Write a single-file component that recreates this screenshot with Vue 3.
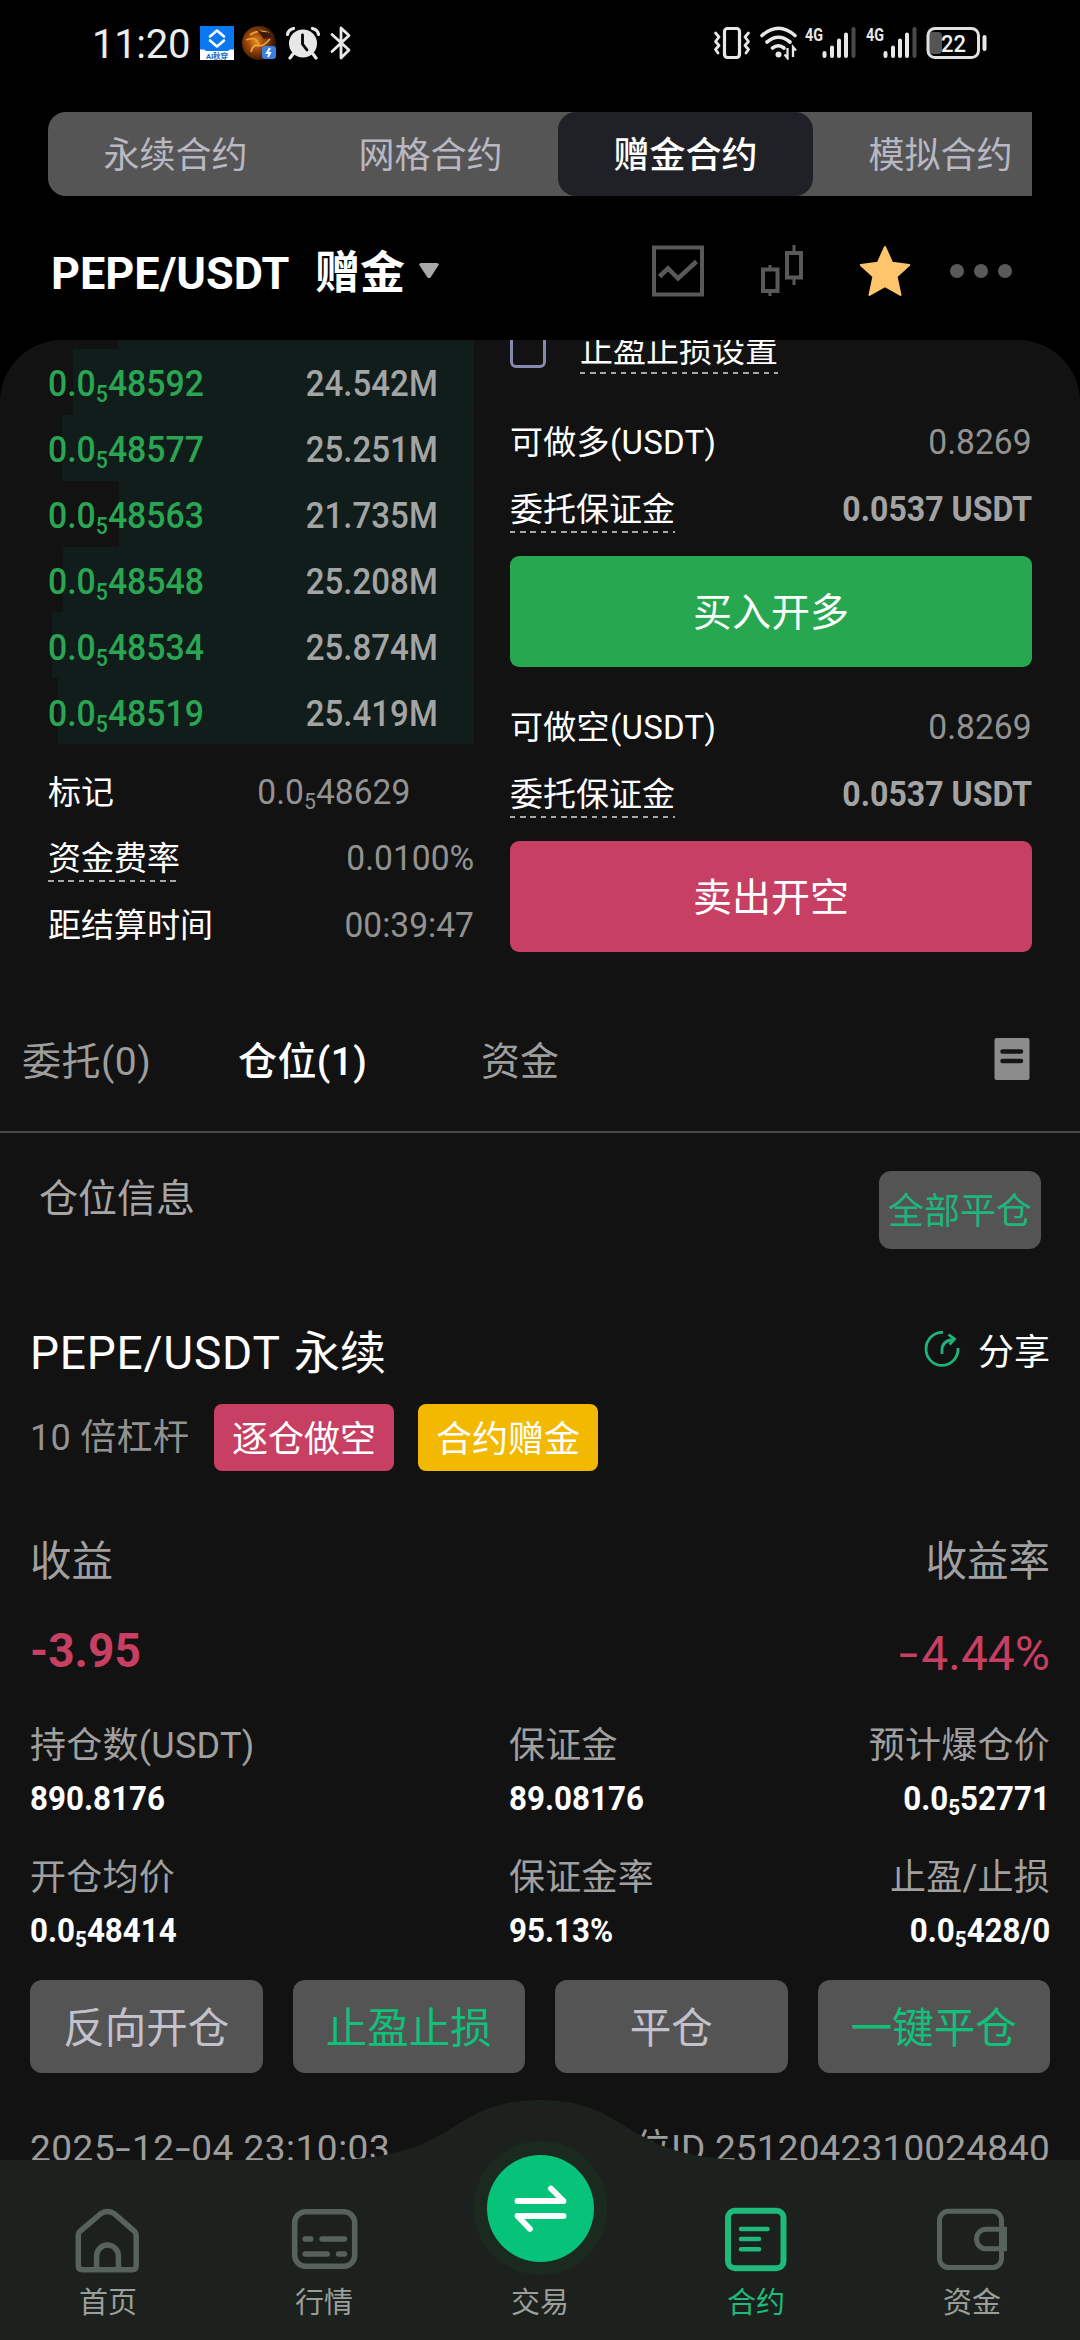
<script setup>
const modes = ['永续合约', '网格合约', '赠金合约', '模拟合约']
const bids = [
  { tail: '48592', qty: '24.542M', depth: 401 },
  { tail: '48577', qty: '25.251M', depth: 412 },
  { tail: '48563', qty: '21.735M', depth: 355 },
  { tail: '48548', qty: '25.208M', depth: 411 },
  { tail: '48534', qty: '25.874M', depth: 422 },
  { tail: '48519', qty: '25.419M', depth: 416 }
]
const orders = [
  { label: '可做多(USDT)', action: '买入开多', side: 'buy' },
  { label: '可做空(USDT)', action: '卖出开空', side: 'sell' }
]
const stats = [
  { label: '持仓数(USDT)', value: '890.8176' },
  { label: '保证金', value: '89.08176' },
  { label: '预计爆仓价', value: '0.0', sub: '5', tail: '52771' },
  { label: '开仓均价', value: '0.0', sub: '5', tail: '48414' },
  { label: '保证金率', value: '95.13%' },
  { label: '止盈/止损', value: '0.0', sub: '5', tail: '428/0' }
]
const actions = [
  { text: '反向开仓' },
  { text: '止盈止损', green: true },
  { text: '平仓' },
  { text: '一键平仓', green: true }
]
</script>

<template>
  <div class="app">
    <header class="status">
      <span class="clock">11:20</span>
      <svg class="st-app" width="34" height="34" viewBox="0 0 34 34">
        <rect width="34" height="34" fill="#0a78f0" />
        <path d="M0 23.5h4l2 1.5h22l2-1.5h4V34H0z" fill="#fff" />
        <path d="M10 10.500l7-6 7 6M10 14.500l7 6 7-6" fill="none" stroke="#fff" stroke-width="2.600" stroke-linejoin="round" stroke-linecap="round" />
        <text x="17" y="32.500" text-anchor="middle" font-size="7.500" font-weight="700" fill="#1a66c8">AI秋穿</text>
      </svg>
      <svg class="st-globe" width="36" height="34" viewBox="0 0 36 34">
        <defs>
          <radialGradient id="ember" cx=".4" cy=".45" r=".6">
            <stop offset="0" stop-color="#e78a1c" />
            <stop offset=".4" stop-color="#a2480c" />
            <stop offset="1" stop-color="#2c1408" />
          </radialGradient>
        </defs>
        <circle cx="17" cy="17" r="17" fill="url(#ember)" />
        <path d="M8 9q8-6 19-2M4 14q10-4 12 3t12-4M9 26q2-9 8-6" fill="none" stroke="#e8a63a" stroke-width="1.800" />
        <path d="M14 3q7 4 12 3l4 5-8 2z" fill="#3a1a0c" />
        <rect x="20" y="20" width="14" height="13" rx="3" fill="#3b7fe0" />
        <path d="M28 22l-3 5h3l-2 4" fill="none" stroke="#fff" stroke-width="2" />
      </svg>
      <svg class="st-alarm" width="34" height="34" viewBox="0 0 34 34">
        <circle cx="17" cy="17.500" r="14" fill="#e8e8e8" />
        <path d="M1.500 8.500Q2 4 7.500 2.500M32.500 8.500Q32 4 26.500 2.500M7 28l-3 4M27 28l3 4" fill="none" stroke="#e8e8e8" stroke-width="3.200" stroke-linecap="round" />
        <path d="M16.500 9v9l4.500 6" fill="none" stroke="#000" stroke-width="2.800" stroke-linecap="round" />
      </svg>
      <svg class="st-bt" width="22" height="36" viewBox="0 0 22 36">
        <path d="M2 9.500L19 25l-8 8V3l8 7.500L2 26.500" fill="none" stroke="#e8e8e8" stroke-width="2.800" stroke-linejoin="round" stroke-linecap="round" />
      </svg>
      <span class="grow"></span>
      <svg width="38" height="34" viewBox="0 0 38 34">
        <rect x="11.500" y="2.500" width="15" height="29" rx="3" fill="none" stroke="#e8e8e8" stroke-width="3.200" />
        <path d="M2.500 7l3.500 4-3.500 4.500 3.500 4-3.500 4 2.500 3.500M35.500 7l-3.500 4 3.500 4.500-3.500 4 3.500 4-2.500 3.500" fill="none" stroke="#e8e8e8" stroke-width="2.800" stroke-linecap="round" stroke-linejoin="round" />
      </svg>
      <svg class="st-wifi" width="38" height="34" viewBox="0 0 38 34">
        <path d="M2 9.500Q18.500-5 35 9.500M7 16q11.500-9.500 23 0M12.500 22q6-4.500 11.500 0" fill="none" stroke="#e8e8e8" stroke-width="3.600" stroke-linecap="round" />
        <circle cx="18.500" cy="28.500" r="3" fill="#e8e8e8" />
        <path d="M27.500 22v10l-3-3.500M33 31V21l3 3.500" fill="none" stroke="#e8e8e8" stroke-width="2.300" />
      </svg>
      <svg v-for="n in 2" :key="n" class="st-sig" width="51" height="34" viewBox="0 0 51 34">
        <text x="0" y="14.500" font-size="18" font-weight="700" textLength="18" lengthAdjust="spacingAndGlyphs" fill="#e8e8e8">4G</text>
        <path d="M19.500 27v3M27 21.500V30M34 14.500V30M41 8.500V30" stroke="#e8e8e8" stroke-width="4" stroke-linecap="round" />
        <path d="M48.500 3v27" stroke="#4a4a4a" stroke-width="4" stroke-linecap="round" />
      </svg>
      <svg class="st-bat" width="62" height="34" viewBox="0 0 62 34">
        <rect x="3" y="6" width="13" height="22" rx="4" fill="#555" />
        <rect x="2" y="2.500" width="50.500" height="29" rx="7" fill="none" stroke="#e0e0e0" stroke-width="3" />
        <path d="M58.500 11v12" stroke="#e8e8e8" stroke-width="4" stroke-linecap="round" />
        <text x="27.500" y="25.500" text-anchor="middle" font-size="24" font-weight="500" textLength="25" lengthAdjust="spacingAndGlyphs" fill="#f0f0f0">22</text>
      </svg>
    </header>

    <nav class="modes">
      <span v-for="(m, i) in modes" :key="m" class="mode" :class="{ on: i === 2 }">{{ m }}</span>
    </nav>

    <div class="pair">
      <span class="pair-name">PEPE/USDT</span>
      <span class="pair-tag">赠金</span>
      <span class="caret"></span>
      <svg class="ic-chart" width="52" height="52" viewBox="0 0 52 52" fill="none" stroke="#595959">
        <rect x="2" y="2.500" width="48" height="47" stroke-width="4" />
        <path d="M7.500 31.500l8.500-8 10 10 18.500-17" stroke-width="4.500" />
      </svg>
      <svg class="ic-candle" width="44" height="52" viewBox="0 0 44 52" fill="none" stroke="#595959" stroke-width="4">
        <rect x="3" y="24.500" width="14.500" height="21.500" />
        <path d="M10 20v4M10 46v5" stroke-width="3" />
        <rect x="27" y="8" width="14" height="24.500" />
        <path d="M34 0v8M34 33v7" stroke-width="3" />
      </svg>
      <svg class="ic-star" width="52" height="52" viewBox="0 0 52 52">
        <path d="M26 2l7.200 15.800 17 2.200-12.600 11.600L41.500 50 26 41.200 10.500 50l3.900-18.400L1.800 20l17-2.200z" fill="#ffc56c" stroke="#ffc56c" stroke-width="2" stroke-linejoin="round" />
      </svg>
      <span class="dots"><i></i><i></i><i></i></span>
    </div>

    <main class="panel">
      <section class="trade">
        <div class="book">
          <div class="book-cut"></div>
          <div v-for="b in bids" :key="b.tail" class="bid" :style="{ '--depth': b.depth + 'px' }">
            <span class="price">0.0<sub>5</sub>{{ b.tail }}</span>
            <span class="qty">{{ b.qty }}</span>
          </div>
          <div class="meta">
            <div class="line">
              <span>标记</span><span class="num mark">0.0<sub>5</sub>48629</span>
            </div>
            <div class="line">
              <span class="hint">资金费率</span><span class="num">0.0100%</span>
            </div>
            <div class="line">
              <span>距结算时间</span><span class="num">00:39:47</span>
            </div>
          </div>
        </div>

        <div class="form">
          <div class="tpsl"><i class="check"></i><span class="hint">止盈止损设置</span></div>
          <div v-for="o in orders" :key="o.side" class="order">
            <div class="line avail"><span class="avail-label">{{ o.label }}</span><span class="num">0.8269</span></div>
            <div class="line"><span class="hint">委托保证金</span><span class="num strong">0.0537 USDT</span></div>
            <button class="submit" :class="o.side">{{ o.action }}</button>
          </div>
        </div>
      </section>

      <nav class="tabs">
        <span class="t1">委托(0)</span>
        <span class="t2 on">仓位(1)</span>
        <span class="t3">资金</span>
        <svg width="36" height="44" viewBox="0 0 36 44">
          <rect x=".5" y="1" width="35" height="42" rx="2" fill="#8c8c8c" />
          <path d="M8.500 14.500h18.500M8.500 24h18.500" stroke="#151515" stroke-width="4.500" stroke-linecap="round" />
        </svg>
      </nav>

      <section class="pos-head">
        <span class="pos-title">仓位信息</span>
        <button class="close-all">全部平仓</button>
      </section>

      <section class="position">
        <div class="row title">
          <span class="name"><span class="symbol">PEPE/USDT</span> 永续</span>
          <span class="share">
            <svg width="36" height="38" viewBox="0 0 36 38" fill="none" stroke="#1fb57a" stroke-width="2.800">
              <path d="M19 2.500A16 16.500 0 1 0 34 18" />
              <path d="M18 24v-4q0-9 11-10.500M24.500 4.500l6 4.500-5 5.500" />
            </svg>
            分享
          </span>
        </div>
        <div class="tags">
          <span class="lever">10 倍杠杆</span>
          <span class="tag red">逐仓做空</span>
          <span class="tag gold">合约赠金</span>
        </div>
        <div class="row pnl-label"><span>收益</span><span>收益率</span></div>
        <div class="row pnl"><span class="amount">-3.95</span><span class="rate"><b>-</b>4.44%</span></div>
        <div class="stats">
          <div v-for="s in stats" :key="s.label" class="stat">
            <span class="s-label">{{ s.label }}</span>
            <span class="s-value">{{ s.value }}<sub v-if="s.sub">{{ s.sub }}</sub>{{ s.tail }}</span>
          </div>
        </div>
        <div class="actions">
          <button v-for="a in actions" :key="a.text" :class="{ green: a.green }">{{ a.text }}</button>
        </div>
        <div class="row foot"><span class="time">2025<b>-</b>12<b>-</b>04 23:10:03</span><span class="pid">仓位ID 2512042310024840</span></div>
      </section>
    </main>

    <footer class="dock">
      <svg class="dock-bg" width="1080" height="240" viewBox="0 0 1080 240">
        <path d="M0 60H325C462 60 446 0 540 0S618 60 755 60H1080V240H0Z" fill="#1c211d" />
      </svg>
      <div class="dock-items">
        <div class="item">
          <svg width="72" height="72" viewBox="0 0 72 72" fill="none" stroke="#57625a" stroke-width="5.500">
            <path d="M6.300 31.500Q6.300 29 8 27.300L29 9.500Q35.500 5.500 42 9.500L62.500 27.300Q64.200 29 64.200 31.500V61.500Q64.200 65.800 60 65.800H10.500Q6.300 65.800 6.300 61.500Z" />
            <path d="M24.600 65V52a10.900 11 0 0 1 21.800 0V65" />
          </svg>
          <span>首页</span>
        </div>
        <div class="item">
          <svg width="72" height="72" viewBox="0 0 72 72" fill="none" stroke="#57625a" stroke-width="5.500" stroke-linecap="round">
            <rect x="6.700" y="7.800" width="60" height="54.500" rx="11" />
            <path d="M17.200 35h5.600M34 35h22.500M17.200 50h22M50.500 50h6" />
          </svg>
          <span>行情</span>
        </div>
        <div class="item">
          <svg class="swap" width="134" height="134" viewBox="0 0 134 134">
            <circle cx="67.500" cy="67" r="67" fill="#1b2a1e" />
            <circle cx="67.500" cy="67.500" r="53.500" fill="#07c37a" />
            <path d="M44.500 60H90.500L78 47.500M90.500 75H44.500L57 88" fill="none" stroke="#fff" stroke-width="5.800" stroke-linecap="round" stroke-linejoin="round" />
          </svg>
          <span>交易</span>
        </div>
        <div class="item active">
          <svg width="72" height="72" viewBox="0 0 72 72" fill="none" stroke="#1fb97b" stroke-linecap="round">
            <rect x="8" y="6.700" width="55.500" height="57.500" rx="7" stroke-width="6" />
            <path d="M21 25h26.500M21 35h18M21 45.300h18" stroke-width="4.600" />
          </svg>
          <span>合约</span>
        </div>
        <div class="item">
          <svg width="72" height="72" viewBox="0 0 72 72" fill="none" stroke="#57625a" stroke-width="5">
            <rect x="3.500" y="7.300" width="62" height="56.200" rx="9" />
            <path d="M70 25.200H50a9.500 9.800 0 0 0 0 19.600H70M68.500 23v24" />
          </svg>
          <span>资金</span>
        </div>
      </div>
    </footer>
  </div>
</template>

<style>
body {
  background: #000;
}
</style>

<style scoped>
.app {
  position: relative;
  width: 1080px;
  height: 2340px;
  overflow: hidden;
  background: #000;
  color: #fff;
  font-family: Roboto, 'Noto Sans CJK SC', sans-serif;
  line-height: 1;
  white-space: nowrap;
}
svg {
  display: block;
  flex: none;
}
button {
  border: 0;
  padding: 0;
  color: #fff;
  font-family: inherit;
  line-height: 1;
  white-space: nowrap;
}
sub {
  font-size: 0.63em;
  line-height: 0;
  vertical-align: -0.24em;
}
.grow {
  flex: 1;
}

.status {
  display: flex;
  align-items: center;
  height: 86px;
  padding: 0 92px 0 92px;
}
.clock {
  width: 108px;
  padding-top: 4px;
  font-size: 40px;
  letter-spacing: -0.3px;
  color: #ececec;
}
.st-globe {
  margin-left: 8px;
}
.st-alarm {
  margin-left: 8px;
}
.st-bt {
  margin-left: 10px;
}
.st-wifi {
  margin-left: 9px;
}
.st-sig {
  margin-left: 7px;
}
.st-sig + .st-sig {
  margin-left: 10px;
}
.st-bat {
  margin-left: 9px;
}

.modes {
  display: flex;
  height: 84px;
  margin: 26px 48px 0;
  border-radius: 18px 0 0 18px;
  overflow: hidden;
  background: #555;
}
.mode {
  flex: 0 0 255px;
  height: 84px;
  line-height: 89px;
  text-align: center;
  font-size: 36px;
  color: #b9b8c2;
}
.mode.on {
  border-radius: 18px;
  background: #202126;
  color: #fff;
  font-weight: 500;
}

.pair {
  display: flex;
  align-items: center;
  height: 144px;
  padding: 5px 67px 0 51px;
  box-sizing: border-box;
}
.pair-name {
  width: 264px;
  padding-top: 5px;
  font-size: 45px;
  font-weight: 700;
}
.pair-tag {
  width: 104px;
  padding-top: 6px;
  font-size: 45px;
  font-weight: 700;
}
.caret {
  width: 20px;
  height: 15px;
  margin-top: 0;
  background: #a8a8a8;
  clip-path: polygon(0 10%, 8% 0, 92% 0, 100% 10%, 56% 100%, 44% 100%);
}
.ic-chart {
  margin-left: 213px;
}
.ic-candle {
  margin-left: 56px;
}
.ic-star {
  margin-left: 55px;
}
.dots {
  display: flex;
  gap: 10px;
  margin-left: 39px;
}
.dots i {
  width: 14px;
  height: 14px;
  border-radius: 50%;
  background: #595959;
}

.panel {
  height: 2000px;
  border-radius: 62px 62px 0 0;
  overflow: hidden;
  background: #121212;
}
.trade {
  display: flex;
  justify-content: space-between;
  height: 653px;
  padding: 0 48px;
}
.book {
  width: 426px;
}
.book-cut {
  width: 356px;
  height: 9px;
  margin-left: auto;
  background: #111d1b;
}
.bid {
  display: flex;
  justify-content: space-between;
  align-items: center;
  height: 65.850px;
  padding: 4px 36px 0 0;
  box-sizing: border-box;
  font-size: 37px;
  font-weight: 500;
  background: linear-gradient(#111d1b, #111d1b) right / var(--depth) 100% no-repeat;
}
.price {
  color: #2aa652;
  transform: scaleX(0.913);
  transform-origin: left;
}
.qty {
  color: #a3a5a5;
  transform: scaleX(0.893);
  transform-origin: right;
}
.meta {
  margin-top: 15px;
}
.line {
  display: flex;
  justify-content: space-between;
  align-items: center;
  height: 66.500px;
  font-size: 33px;
}
.num {
  font-size: 35px;
  color: #929292;
  transform: scaleX(0.96);
  transform-origin: right;
}
.mark {
  margin-right: 64px;
}
.strong {
  font-size: 34.500px;
  font-weight: 700;
  color: #a3a3a3;
  transform: scaleX(0.93);
}
.hint {
  padding: 7px 0;
  background: repeating-linear-gradient(90deg, #a8a8a8 0 5.500px, transparent 5.500px 10.200px) bottom / 100% 2px no-repeat;
}

.form {
  width: 522px;
}
.tpsl {
  display: flex;
  align-items: center;
  height: 60px;
  margin-top: -20px;
  font-size: 33px;
}
.check {
  width: 36px;
  height: 36px;
  margin-right: 34px;
  box-sizing: border-box;
  border: 3.500px solid #868aae;
  border-radius: 6px;
}
.order {
  padding-top: 26px;
}
.tpsl + .order {
  padding-top: 28px;
}
.order .line {
  height: 66px;
}
.order .avail {
  height: 68px;
}
.avail-label {
  letter-spacing: 0.3px;
}
.submit {
  display: block;
  width: 522px;
  height: 111px;
  margin-top: 14px;
  padding-top: 4px;
  border-radius: 9px;
  font-size: 39px;
}
.buy {
  background: #26a750;
}
.sell {
  background: #c73f62;
}

.tabs {
  display: flex;
  align-items: center;
  height: 138px;
  padding: 0 50px 0 22px;
  font-size: 39px;
  color: #9d9d9d;
  border-bottom: 2px solid #484848;
}
.tabs .on {
  color: #fff;
  font-weight: 500;
}
.t1 {
  width: 216px;
  letter-spacing: 0.5px;
}
.t2 {
  width: 243px;
  letter-spacing: 0.4px;
}
.t3 {
  flex: 1;
}
.tabs svg {
  margin-top: -6px;
}

.pos-head {
  display: flex;
  justify-content: space-between;
  padding: 38px 39px 0 39px;
}
.pos-title {
  height: 60px;
  line-height: 57px;
  font-size: 39px;
  color: #a6a6a6;
}
.close-all {
  width: 162px;
  height: 78px;
  padding-top: 3px;
  border-radius: 12px;
  background: #545454;
  font-size: 36px;
  color: #1db67c;
}

.position {
  padding: 73px 30px 0;
}
.row {
  display: flex;
  justify-content: space-between;
  align-items: center;
  height: 60px;
}
.name {
  padding-top: 2px;
  font-size: 46px;
}
.symbol {
  margin-right: 2px;
  letter-spacing: 0.8px;
}
.share {
  display: flex;
  align-items: center;
  gap: 18px;
  padding-top: 2px;
  font-size: 36px;
}
.share svg {
  margin-top: -8px;
}
.tags {
  display: flex;
  align-items: center;
  height: 67px;
  margin-top: 22px;
  font-size: 36px;
}
.lever {
  width: 184px;
  color: #929292;
  padding-top: 1px;
  letter-spacing: 0.3px;
}
.tag {
  width: 180px;
  height: 67px;
  margin-right: 24px;
  border-radius: 8px;
  line-height: 72px;
  text-align: center;
}
.red {
  background: #c73f62;
}
.gold {
  background: #f2b900;
}
.pnl-label {
  margin-top: 61px;
  font-size: 41.500px;
  color: #a0a0a0;
}
.pnl {
  margin-top: 30px;
  color: #c73f62;
}
.amount {
  font-size: 47.500px;
  font-weight: 700;
  transform: scaleX(0.97);
  transform-origin: left;
}
.rate {
  padding-top: 3px;
  font-size: 48px;
}
.rate b {
  display: inline-block;
  margin-right: 6px;
  font-weight: 400;
  transform: scaleX(1.45);
}
.stats {
  display: grid;
  grid-template-columns: 479px 300px 241px;
  row-gap: 35px;
  margin-top: 40px;
}
.stat {
  display: flex;
  flex-direction: column;
}
.stat:nth-child(3n) {
  align-items: flex-end;
}
.s-label {
  height: 46px;
  line-height: 48px;
  font-size: 36px;
  letter-spacing: 0.25px;
  color: #a0a0a0;
}
.s-value {
  height: 40px;
  margin-top: 11px;
  line-height: 40px;
  font-size: 33.500px;
  font-weight: 700;
  transform: scaleX(0.935);
  transform-origin: left;
}
.s-value sub {
  font-size: 0.66em;
}
.stat:nth-child(3n) .s-value {
  transform-origin: right;
}
.actions {
  display: grid;
  grid-template-columns: repeat(4, 1fr);
  gap: 30px;
  margin-top: 29px;
}
.actions button {
  height: 93px;
  padding-top: 5px;
  border-radius: 12px;
  background: #545454;
  font-size: 41.500px;
  color: #c2c1cc;
}
.actions .green {
  color: #11c07b;
}
.foot {
  margin-top: 45px;
  font-size: 37px;
  color: #9d9d9d;
}
.foot b {
  display: inline-block;
  margin: 0 3px;
  font-weight: 400;
  transform: scaleX(1.5);
}
.time {
  letter-spacing: 0.5px;
}
.pid {
  letter-spacing: 0.15px;
}

.dock {
  position: absolute;
  left: 0;
  right: 0;
  bottom: 0;
  height: 240px;
}
.dock-bg {
  position: absolute;
  inset: 0;
}
.dock-items {
  position: relative;
  display: flex;
  height: 240px;
}
.item {
  flex: 1;
  display: flex;
  flex-direction: column;
  align-items: center;
  justify-content: flex-end;
  padding-bottom: 17px;
  font-size: 29px;
  color: #9a9f9b;
}
.item span {
  height: 40px;
  margin-top: 7px;
  line-height: 40px;
}
.swap {
  margin-bottom: 1px;
}
.active {
  color: #1fb97b;
}
</style>
